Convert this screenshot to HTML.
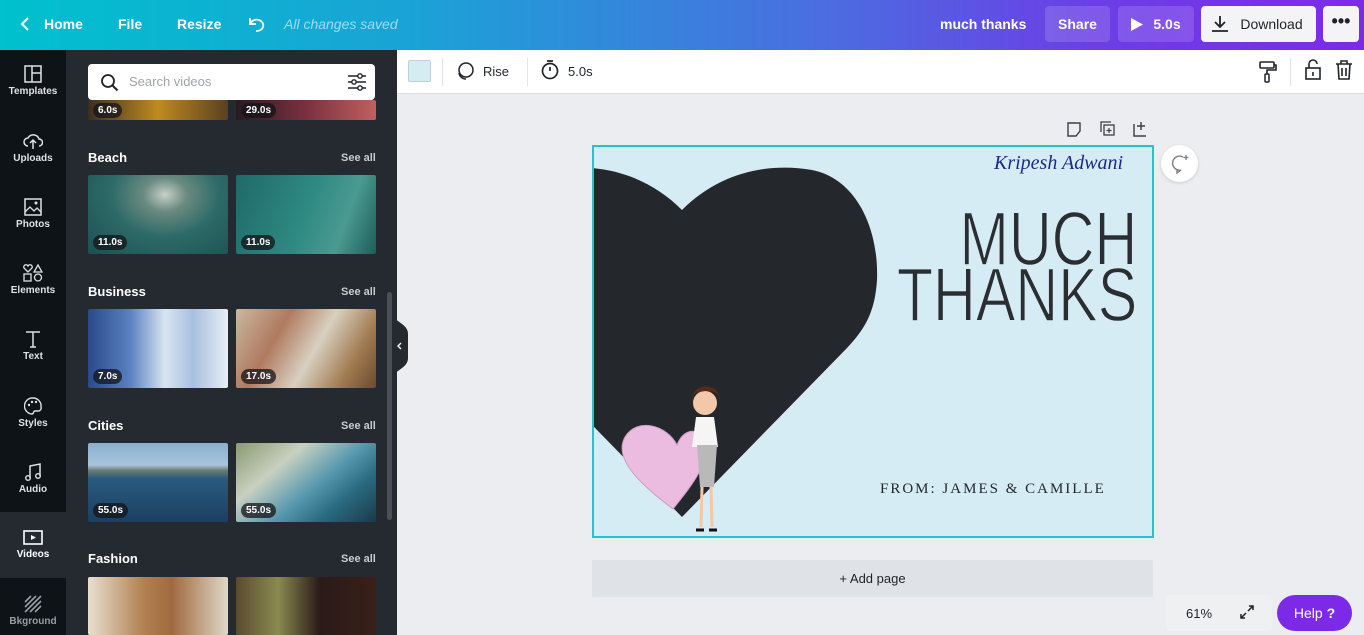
<!DOCTYPE html>
<html><head><meta charset="utf-8"><style>
*{margin:0;padding:0;box-sizing:border-box}
body{width:1364px;height:635px;overflow:hidden;font-family:"Liberation Sans",sans-serif;background:#ebedf0;position:relative}
.abs{position:absolute}
.top{left:0;top:0;width:1364px;height:50px;background:linear-gradient(90deg,#00c1cd 0%,#1aa3d6 30%,#4a6ee0 60%,#6b3fe6 80%,#7d2ae8 100%)}
.top .t{position:absolute;color:#fff;font-weight:bold;font-size:14px;top:16px}
.btn{position:absolute;top:6px;height:36px;border-radius:4px;background:rgba(255,255,255,0.14);color:#fff;font-weight:bold;font-size:14px;line-height:36px;text-align:center}
.rail{left:0;top:50px;width:66px;height:585px;background:#0e1318}
.ri{position:absolute;left:0;width:66px;text-align:center;color:#dfe1e4;font-size:10px;font-weight:bold}
.ri svg{display:block;margin:0 auto 3px}
.panel{left:66px;top:50px;width:331px;height:585px;background:#252930}
.th{position:absolute;width:140px;height:79px;border-radius:2px;overflow:hidden}
.dur{position:absolute;left:5px;bottom:4px;background:rgba(20,20,25,0.75);color:#fff;font-size:10px;font-weight:bold;padding:2px 5px;border-radius:8px}
.sec{position:absolute;left:88px;color:#fff;font-weight:bold;font-size:13px}
.see{position:absolute;left:341px;color:#c9cbd0;font-weight:bold;font-size:11px}
.tool{left:397px;top:50px;width:967px;height:44px;background:#fff;border-bottom:1px solid #dde0e4}
</style></head><body>
<div class="abs top">
 <svg class="abs" style="left:20px;top:16px" width="10" height="16"><path d="M8 2L2 8l6 6" stroke="#fff" stroke-width="2" fill="none"/></svg>
 <span class="t" style="left:44px">Home</span>
 <span class="t" style="left:118px">File</span>
 <span class="t" style="left:177px">Resize</span>
 <svg class="abs" style="left:246px;top:14px" width="22" height="20"><path d="M4 4v6h6M4 10c2-4 6-5 9-4 3 1 5 4 4 7-1 3-4 4-7 4" stroke="#fff" stroke-width="1.8" fill="none"/></svg>
 <span class="abs" style="left:284px;top:16px;color:#9fdbf0;font-style:italic;font-size:14px">All changes saved</span>
 <span class="t" style="left:940px">much thanks</span>
 <div class="btn" style="left:1045px;width:65px">Share</div>
 <div class="btn" style="left:1118px;width:76px"><svg style="position:absolute;left:12px;top:11px" width="14" height="15"><path d="M1 1l12 6.5L1 14z" fill="#fff"/></svg><span style="margin-left:22px">5.0s</span></div>
 <div class="btn" style="left:1201px;width:115px;background:#f4f4f6;color:#1f2328;font-weight:normal"><svg style="position:absolute;left:10px;top:9px" width="18" height="18"><path d="M9 1v11M4 7l5 5 5-5M1 16h16" stroke="#1f2328" stroke-width="1.8" fill="none"/></svg><span style="margin-left:26px">Download</span></div>
 <div class="btn" style="left:1323px;width:36px;background:#f4f4f6;color:#1f2328;font-size:18px;line-height:30px">•••</div>
</div>
<div class="abs rail">
 <div class="ri" style="top:15px"><svg width="18" height="18"><rect x="1" y="1" width="16" height="16" fill="none" stroke="#dfe1e4" stroke-width="1.5"/><path d="M8 1v16M8 8h9" stroke="#dfe1e4" stroke-width="1.5"/></svg>Templates</div>
 <div class="ri" style="top:82px"><svg width="20" height="18"><path d="M5 14a4 4 0 010-8 6 6 0 0111 1 3.5 3.5 0 010 7M10 8v9M7 11l3-3 3 3" stroke="#dfe1e4" stroke-width="1.5" fill="none"/></svg>Uploads</div>
 <div class="ri" style="top:148px"><svg width="18" height="18"><rect x="1" y="1" width="16" height="16" fill="none" stroke="#dfe1e4" stroke-width="1.5"/><path d="M1 14l5-5 4 4 3-3 4 4" stroke="#dfe1e4" stroke-width="1.3" fill="none"/><circle cx="12" cy="5" r="1.5" fill="#dfe1e4"/></svg>Photos</div>
 <div class="ri" style="top:214px"><svg width="20" height="18"><path d="M5 8L1 4a2 2 0 014-2 2 2 0 014 2z" fill="none" stroke="#dfe1e4" stroke-width="1.3"/><path d="M15 1l4 7h-8z" fill="none" stroke="#dfe1e4" stroke-width="1.3"/><rect x="1" y="10" width="7" height="7" fill="none" stroke="#dfe1e4" stroke-width="1.3"/><circle cx="15" cy="13.5" r="3.5" fill="none" stroke="#dfe1e4" stroke-width="1.3"/></svg>Elements</div>
 <div class="ri" style="top:280px"><svg width="18" height="18"><path d="M2 2h14M9 2v15M6 17h6" stroke="#dfe1e4" stroke-width="1.5" fill="none"/></svg>Text</div>
 <div class="ri" style="top:347px"><svg width="18" height="18"><path d="M9 1a8 8 0 00-1 16c2 0 1-3 3-3h3a3 3 0 003-4A8 8 0 009 1z" fill="none" stroke="#dfe1e4" stroke-width="1.4"/><circle cx="5" cy="8" r="1.2" fill="#dfe1e4"/><circle cx="8" cy="5" r="1.2" fill="#dfe1e4"/><circle cx="12" cy="5" r="1.2" fill="#dfe1e4"/></svg>Styles</div>
 <div class="ri" style="top:413px"><svg width="18" height="18"><path d="M6 15V3l10-2v12" stroke="#dfe1e4" stroke-width="1.5" fill="none"/><circle cx="4" cy="15" r="2.3" fill="none" stroke="#dfe1e4" stroke-width="1.4"/><circle cx="14" cy="13" r="2.3" fill="none" stroke="#dfe1e4" stroke-width="1.4"/></svg>Audio</div>
 <div class="abs" style="left:0;top:462px;width:66px;height:66px;background:#252930"></div>
 <div class="ri" style="top:480px;color:#fff"><svg width="20" height="16"><rect x="1" y="1" width="18" height="13" fill="none" stroke="#fff" stroke-width="1.6"/><path d="M8 5l5 2.5L8 10z" fill="#fff"/></svg>Videos</div>
 <div class="ri" style="top:545px;color:#9a9da3"><svg width="18" height="18"><path d="M1 7l6-6M1 12L12 1M1 17L17 1M6 17L17 6M11 17l6-6" stroke="#9a9da3" stroke-width="1.6"/></svg>Bkground</div>
</div>
<div class="abs panel">
 <div class="th" style="left:22px;top:50px;height:20px;background:linear-gradient(90deg,#3a3020,#c08a20 50%,#5a4020)"><div class="dur" style="bottom:2px">6.0s</div></div>
 <div class="th" style="left:170px;top:50px;height:20px;background:linear-gradient(90deg,#2a1a20,#7a3040 50%,#c06060)"><div class="dur" style="bottom:2px">29.0s</div></div>
 <div class="abs" style="left:22px;top:14px;width:287px;height:36px;background:#fff;border-radius:4px">
  <svg class="abs" style="left:12px;top:9px" width="20" height="20"><circle cx="8" cy="8" r="6" fill="none" stroke="#1f2328" stroke-width="1.8"/><path d="M12.5 12.5l5 5" stroke="#1f2328" stroke-width="2"/></svg>
  <span class="abs" style="left:41px;top:10px;color:#a0a4a9;font-size:13px">Search videos</span>
  <svg class="abs" style="left:259px;top:9px" width="20" height="18"><path d="M1 3h18M1 9h18M1 15h18" stroke="#1f2328" stroke-width="1.4"/><circle cx="13" cy="3" r="2.2" fill="#fff" stroke="#1f2328" stroke-width="1.4"/><circle cx="7" cy="9" r="2.2" fill="#fff" stroke="#1f2328" stroke-width="1.4"/><circle cx="13" cy="15" r="2.2" fill="#fff" stroke="#1f2328" stroke-width="1.4"/></svg>
 </div>
 <div class="abs" style="left:321px;top:242px;width:5px;height:228px;background:#4b4f57;border-radius:3px"></div>
</div>
<span class="sec" style="top:150px">Beach</span><span class="see" style="top:152px">See all</span>
<div class="th" style="left:88px;top:175px;background:radial-gradient(ellipse at 55% 25%,#c8d0c8 0,#6a8a80 20%,#2d6a68 50%,#1d4f52 100%)"><div class="dur">11.0s</div></div>
<div class="th" style="left:236px;top:175px;background:linear-gradient(110deg,#1f6a68,#2f8a84 50%,#4a9a90 75%,#1d5d5a)"><div class="dur">11.0s</div></div>
<span class="sec" style="top:284px">Business</span><span class="see" style="top:286px">See all</span>
<div class="th" style="left:88px;top:309px;background:linear-gradient(90deg,#2a4a8a 0,#5a80c0 30%,#d8e4f0 55%,#a8c0e0 75%,#e8eef5)"><div class="dur">7.0s</div></div>
<div class="th" style="left:236px;top:309px;background:linear-gradient(120deg,#c8b8a0,#b07a60 30%,#d8d0c0 55%,#a07a50 80%,#6a4a30)"><div class="dur">17.0s</div></div>
<span class="sec" style="top:418px">Cities</span><span class="see" style="top:420px">See all</span>
<div class="th" style="left:88px;top:443px;background:linear-gradient(180deg,#8ab0d0 0,#a8c4dc 28%,#6a7a70 35%,#2a5a80 45%,#1a4060 100%)"><div class="dur">55.0s</div></div>
<div class="th" style="left:236px;top:443px;background:linear-gradient(140deg,#8a9a70,#c8d0c0 30%,#5a9ab0 55%,#2a6a80 75%,#1a3a48)"><div class="dur">55.0s</div></div>
<span class="sec" style="top:551px">Fashion</span><span class="see" style="top:553px">See all</span>
<div class="th" style="left:88px;top:577px;height:58px;background:linear-gradient(90deg,#e8e0d0,#b08050 40%,#a06a40 60%,#e0d8c8)"></div>
<div class="th" style="left:236px;top:577px;height:58px;background:linear-gradient(90deg,#5a4a30,#8a8a50 30%,#2a1a18 60%,#3a2018)"></div>
<svg class="abs" style="left:392px;top:310px" width="16" height="72"><path d="M0 0c0 8 5 10 10 14 4 3 6 6 6 10v24c0 4-2 7-6 10-5 4-10 6-10 14z" fill="#252930"/><path d="M9 33l-3 3 3 3" stroke="#fff" stroke-width="1.4" fill="none"/></svg>
<div class="abs tool">
 <div class="abs" style="left:11px;top:10px;width:23px;height:22px;background:#d6ecf3;border:1px solid #c0d0d8;border-radius:2px"></div>
 <div class="abs" style="left:45px;top:8px;width:1px;height:28px;background:#e2e4e7"></div>
 <svg class="abs" style="left:58px;top:11px" width="20" height="20"><circle cx="11" cy="9" r="7" fill="none" stroke="#1f2328" stroke-width="1.5"/><path d="M4 12a7 7 0 007 6" stroke="#1f2328" stroke-width="1.5" fill="none"/></svg>
 <span class="abs" style="left:86px;top:14px;font-size:13px;color:#1f2328">Rise</span>
 <div class="abs" style="left:130px;top:8px;width:1px;height:28px;background:#e2e4e7"></div>
 <svg class="abs" style="left:143px;top:9px" width="20" height="22"><circle cx="10" cy="12" r="7.5" fill="none" stroke="#1f2328" stroke-width="1.7"/><path d="M7 2h6M10 12V8" stroke="#1f2328" stroke-width="1.7"/></svg>
 <span class="abs" style="left:171px;top:14px;font-size:13px;color:#1f2328">5.0s</span>
 <svg class="abs" style="left:862px;top:10px" width="18" height="24"><rect x="1" y="2" width="14" height="6" rx="1" fill="none" stroke="#1f2328" stroke-width="1.6"/><path d="M15 5h2v5H8v4" stroke="#1f2328" stroke-width="1.6" fill="none"/><rect x="6" y="14" width="4" height="8" rx="1" fill="none" stroke="#1f2328" stroke-width="1.5"/></svg>
 <div class="abs" style="left:893px;top:8px;width:1px;height:28px;background:#e2e4e7"></div>
 <svg class="abs" style="left:907px;top:9px" width="18" height="22"><rect x="2" y="9" width="14" height="11" fill="none" stroke="#1f2328" stroke-width="1.6"/><path d="M5 9V5a4 4 0 018 0M9 13v4" stroke="#1f2328" stroke-width="1.6" fill="none"/></svg>
 <svg class="abs" style="left:938px;top:10px" width="18" height="20"><path d="M1 4h16M6 4V1h6v3M3 4l1 15h10l1-15M7 8v8M11 8v8" stroke="#1f2328" stroke-width="1.6" fill="none"/></svg>
</div>
<svg class="abs" style="left:1066px;top:121px" width="90" height="18"><path d="M2 2h12v8l-4 5H2z" fill="none" stroke="#3a3f45" stroke-width="1.4"/><rect x="38" y="4" width="10" height="10" fill="none" stroke="#3a3f45" stroke-width="1.3"/><path d="M35 11V1h10" stroke="#3a3f45" stroke-width="1.3" fill="none"/><path d="M43 7v5M40.5 9.5h5" stroke="#3a3f45" stroke-width="1.2"/><path d="M68 3v12h12M75 1v8M71 5h8" stroke="#3a3f45" stroke-width="1.4" fill="none"/></svg>
<div class="abs" style="left:1161px;top:145px;width:37px;height:37px;border-radius:50%;background:#fff;box-shadow:0 1px 3px rgba(0,0,0,.15)"><svg style="position:absolute;left:9px;top:9px" width="20" height="20"><path d="M13 3a7 7 0 10-2 13l-4 3v-4" fill="none" stroke="#7a7f86" stroke-width="1.4"/><path d="M16 1v5M13.5 3.5h5" stroke="#7a7f86" stroke-width="1.3"/></svg></div>
<div class="abs" style="left:592px;top:145px;width:562px;height:393px;border:2px solid #23c4cc;background:#d5ecf4;overflow:hidden">
 <svg class="abs" style="left:-2px;top:-2px" width="562" height="393">
  <path d="M90 65 C130 25 180 18 220 25 C262 33 287 80 285 135 C283 168 272 185 255 203 L90 372 L-75 203 C-92 185 -103 168 -105 135 C-107 80 -82 33 -40 25 C0 18 50 25 90 65Z" fill="#24282d"/>
  <path d="M85 300c-10-20-40-28-52-8-10 18 5 40 48 72 20-25 40-50 30-70-6-12-20-10-26 6z" fill="#ebbbe0" stroke="#c9a0c0" stroke-width="1"/>
  <circle cx="113" cy="258" r="12" fill="#f2c8a8"/>
  <path d="M100 255c0-18 28-18 28 0l-2-6c-6-4-16-4-24 0z" fill="#5a2a1a"/>
  <path d="M104 272h18l4 30h-26z" fill="#f5f5f5"/>
  <path d="M105 300h20l-3 42h-14z" fill="#b9b9b9"/>
  <path d="M110 342l-1 40M119 342l1 40" stroke="#f2c8a8" stroke-width="3"/>
  <path d="M104 385h8M117 385h8" stroke="#111" stroke-width="3"/>
 </svg>
 <span class="abs" style="left:400px;top:5px;font-family:'Liberation Serif',serif;font-style:italic;font-size:20px;color:#1b2a86">Kripesh Adwani</span>
 <div class="abs" style="right:15px;top:65px;text-align:right;font-family:'Liberation Sans',sans-serif;font-size:76px;line-height:56px;color:#2a2e33;transform:scaleX(0.78);transform-origin:right;white-space:nowrap;-webkit-text-stroke:1.4px #d5ecf4;paint-order:normal">MUCH<br>THANKS</div>
 <span class="abs" style="left:286px;top:334px;font-family:'Liberation Serif',serif;font-size:15px;letter-spacing:2px;color:#24282d">FROM: JAMES &amp; CAMILLE</span>
</div>
<div class="abs" style="left:592px;top:560px;width:561px;height:37px;background:#dfe2e6;border-radius:2px;text-align:center;line-height:37px;font-size:13px;color:#1f2328">+ Add page</div>
<div class="abs" style="left:1166px;top:595px;width:106px;height:36px;background:#eef0f2;border-radius:4px"><span class="abs" style="left:20px;top:11px;font-size:13px;color:#1f2328">61%</span><svg class="abs" style="left:73px;top:9px" width="16" height="16"><path d="M9 7l5-5M10 2h4v4M7 9l-5 5M2 10v4h4" stroke="#1f2328" stroke-width="1.5" fill="none"/></svg></div>
<div class="abs" style="left:1277px;top:595px;width:75px;height:36px;border-radius:18px;background:#7d2ae8;color:#fff;font-size:14px;line-height:36px;text-align:center">Help <b>?</b></div>
</body></html>
